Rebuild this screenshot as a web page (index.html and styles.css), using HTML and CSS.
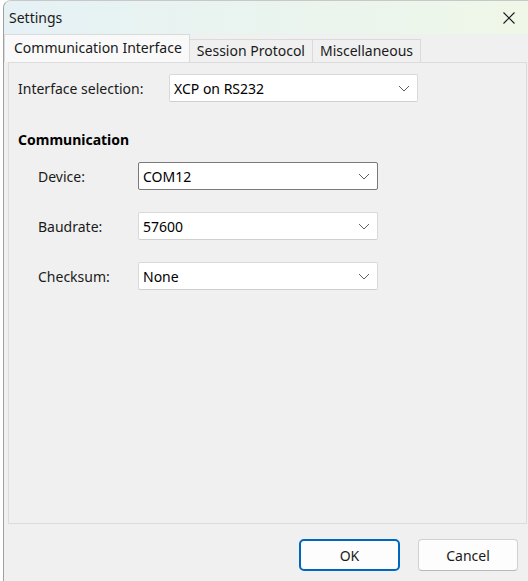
FILE: index.html
```html
<!DOCTYPE html>
<html>
<head>
<meta charset="utf-8">
<title>Settings</title>
<link rel="stylesheet" href="styles.css">
</head>
<body>
<div class="backdrop"></div>
<div class="window">
  <div class="titlebar">
    <span class="title">Settings</span>
    <svg class="close" width="14" height="14" viewBox="0 0 14 14"><path d="M1.5 1.5 L12.5 12.5 M12.5 1.5 L1.5 12.5" stroke="#1a1a1a" stroke-width="1.1" fill="none"/></svg>
  </div>
  <div class="tabs">
    <div class="tab active">Communication Interface</div>
    <div class="tab">Session Protocol</div>
    <div class="tab">Miscellaneous</div>
  </div>
  <div class="panel">
    <div class="row top-row">
      <span class="label">Interface selection:</span>
      <div class="combo combo-wide"><span>XCP on RS232</span><svg class="chev" width="12" height="7" viewBox="0 0 12 7"><path d="M1 1 L6 6 L11 1" stroke="#606060" stroke-width="1" fill="none"/></svg></div>
    </div>
    <div class="group-title">Communication</div>
    <div class="group">
      <div class="row">
        <span class="label sub">Device:</span>
        <div class="combo focus"><span>COM12</span><svg class="chev" width="12" height="7" viewBox="0 0 12 7"><path d="M1 1 L6 6 L11 1" stroke="#606060" stroke-width="1" fill="none"/></svg></div>
      </div>
      <div class="row">
        <span class="label sub">Baudrate:</span>
        <div class="combo"><span>57600</span><svg class="chev" width="12" height="7" viewBox="0 0 12 7"><path d="M1 1 L6 6 L11 1" stroke="#606060" stroke-width="1" fill="none"/></svg></div>
      </div>
      <div class="row">
        <span class="label sub">Checksum:</span>
        <div class="combo"><span>None</span><svg class="chev" width="12" height="7" viewBox="0 0 12 7"><path d="M1 1 L6 6 L11 1" stroke="#606060" stroke-width="1" fill="none"/></svg></div>
      </div>
    </div>
  </div>
  <div class="footer">
    <button class="btn default">OK</button>
    <button class="btn">Cancel</button>
  </div>
</div>
</body>
</html>
```
FILE: styles.css
```css
html, body {
  margin: 0;
  padding: 0;
}
body {
  width: 528px;
  height: 581px;
  overflow: hidden;
  display: flex;
  background: #ffffff;
  font-family: "Noto Sans", "Open Sans", sans-serif;
  font-size: 14px;
  color: #000;
}
.backdrop {
  width: 3px;
  flex: none;
  background: #ffffff;
}
.window {
  flex: 1;
  display: flex;
  flex-direction: column;
  background: #f0f0f0;
  border-left: 1px solid #a0a0a0;
  border-top: 1px solid #c8c8c8;
  border-top-left-radius: 8px;
  overflow: hidden;
}
.titlebar {
  height: 33px;
  flex: none;
  display: flex;
  align-items: center;
  justify-content: space-between;
  padding: 0 12px 0 5px;
  background: linear-gradient(90deg, #e5f1f5 0%, #eaf4ef 50%, #eff7e8 100%);
}
.title {
  font-size: 14px;
  color: #1a1a1a;
}
.close {
  display: block;
}
.tabs {
  height: 28px;
  flex: none;
  display: flex;
  align-items: flex-end;
  padding-left: 0;
}
.tab {
  height: 22px;
  line-height: 22px;
  padding: 0 7px 0 7px;
  border: 1px solid #dadada;
  border-bottom: none;
  border-left: none;
  background: #f0f0f0;
  color: #1a1a1a;
  white-space: nowrap;
}
.tab.active {
  height: 27px;
  line-height: 26px;
  padding: 0 7px 0 9px;
  border-left: 1px solid #dadada;
  background: #f9f9f9;
}
.panel {
  width: 508px;
  height: 449px;
  margin-left: 4px;
  border: 1px solid #dcdcdc;
  background: #f0f0f0;
  padding: 11px 0 0 9px;
  box-sizing: content-box;
  flex: none;
}
.row {
  display: flex;
  align-items: center;
  height: 28px;
}
.label {
  color: #1a1a1a;
  white-space: nowrap;
}
.top-row .label {
  width: 151px;
}
.group-title {
  font-weight: bold;
  margin-top: 28px;
  height: 20px;
  line-height: 20px;
}
.group {
  display: flex;
  flex-direction: column;
  gap: 22px;
  margin-top: 12px;
  padding-left: 20px;
}
.label.sub {
  width: 100px;
}
.combo {
  box-sizing: border-box;
  width: 240px;
  height: 28px;
  background: #ffffff;
  border: 1px solid #d9d9d9;
  border-bottom-color: #cfcfcf;
  border-radius: 2px;
  display: flex;
  align-items: center;
  justify-content: space-between;
  padding: 0 7px 0 4px;
  color: #000;
}
.combo-wide {
  width: 249px;
}
.combo.focus {
  border-color: #7a7a7a;
}
.chev {
  display: block;
}
.footer {
  flex: 1;
  display: flex;
  justify-content: flex-end;
  align-items: flex-start;
  gap: 18px;
  padding: 15px 10px 0 0;
}
.btn {
  font-family: "Noto Sans", "Open Sans", sans-serif;
  font-size: 14px;
  color: #1a1a1a;
  width: 100px;
  height: 32px;
  background: #fdfdfd;
  border: 1px solid #d0d0d0;
  border-bottom-color: #b8b8b8;
  border-radius: 4px;
  padding: 0;
}
.btn.default {
  width: 101px;
  border: 2px solid #0067c0;
  border-radius: 5px;
}
```
